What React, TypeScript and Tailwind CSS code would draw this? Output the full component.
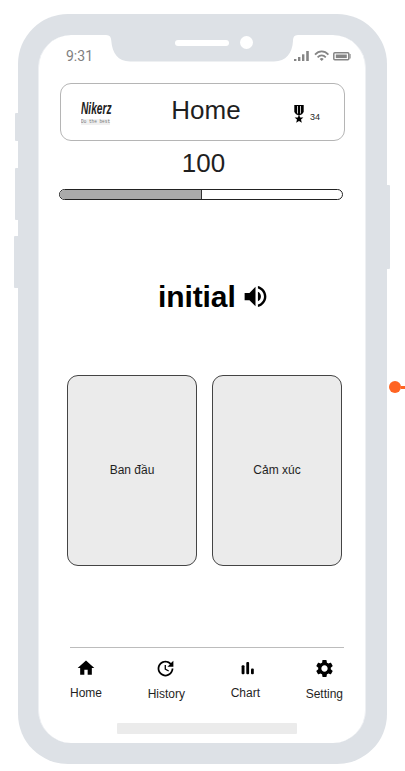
import React from "react";
import { MdHome, MdUpdate, MdSettings, MdVolumeUp } from "react-icons/md";

function StatusIcons() {
  return (
    <svg width="58" height="12" viewBox="0 0 58 12" fill="#858585" className="block">
      <rect x="0" y="9" width="2.4" height="2" />
      <rect x="4" y="7" width="2.4" height="4" />
      <rect x="8" y="4.3" width="2.4" height="6.7" />
      <rect x="12.2" y="1" width="2.6" height="10" />
      <g fill="none" stroke="#858585" strokeWidth="1.7">
        <path d="M21 4.6C25 0.3 30.4 0.3 34.4 4.6" />
        <path d="M23.6 7.3C26 4.8 29.4 4.8 31.8 7.3" />
      </g>
      <path d="M25.7 8.9a3 3 0 0 1 4 0l-2 2.2z" />
      <rect x="39.8" y="2.8" width="15" height="7" rx="1" fill="none" stroke="#858585" strokeWidth="1.5" />
      <rect x="41.8" y="4.5" width="11" height="3.6" />
      <path d="M55.5 4h1.1v4.6h-1.1z" />
    </svg>
  );
}

function Medal() {
  return (
    <svg width="10" height="18" viewBox="0 0 10 18" className="block">
      <path d="M.3 0h9.4v7L8 9.3 5 10.4 2 9.3.3 7z" />
      <path d="M3 1h.8v7.4H3zM6.2 1H7v7.4h-.8z" fill="#fff" />
      <path d="M5 9.8l1.2 2.6 3.2.2-2.4 2 .8 3.1L5 16l-2.8 1.7.8-3.1-2.4-2 3.2-.2z" />
    </svg>
  );
}

function ChartIcon() {
  return (
    <svg width="20" height="20" viewBox="0 0 20 20">
      <rect x="6.6" y="7.3" width="2.9" height="9" rx="1" />
      <rect x="11.3" y="4.1" width="2.8" height="12.2" rx="1" />
      <rect x="16" y="10.5" width="2.8" height="5.8" rx="1" />
    </svg>
  );
}

const tabs = [
  { label: "Home", icon: <MdHome size={20} /> },
  { label: "History", icon: <MdUpdate size={21} /> },
  { label: "Chart", icon: <ChartIcon /> },
  { label: "Setting", icon: <MdSettings size={21} className="ml-px -mr-px" /> },
];

export default function App() {
  return (
    <div className="relative h-[771px] w-[405px] overflow-hidden bg-white pl-[18px] pt-3.5 font-['Liberation_Sans',Arial,sans-serif] text-[#1f1f1f]">
      <div className="absolute left-[15px] top-[113px] h-7 w-1 rounded-l-[1px] bg-[#dde1e6]" />
      <div className="absolute left-[15px] top-[168px] h-[52px] w-1 rounded-l-[1px] bg-[#dde1e6]" />
      <div className="absolute left-3.5 top-[236px] h-[52px] w-[5px] rounded-l-[1px] bg-[#dde1e6]" />
      <div className="absolute left-[386px] top-[185px] h-[84px] w-1 rounded-r-[1px] bg-[#dde1e6]" />
      <div className="absolute left-[389px] top-[381px] flex w-5 items-center">
        <div className="size-3 rounded-full bg-[#ff6422]" />
        <div className="h-[3px] flex-1 bg-[#ff6422]" />
      </div>

      <div className="relative h-[750px] w-[369px] rounded-[50px] bg-[#dde1e6] px-5 pt-[21px]">
        <svg width="192" height="50" viewBox="0 0 192 50" className="absolute left-[88px] top-0 z-10">
          <path d="M0 20V21C4 21.2 5 23 5.3 27C6.2 39 12 47.5 24 47.5H168C180 47.5 186.4 39 187 27C187.2 23 188 21.2 192 21V20Z" fill="#dde1e6" />
          <rect x="69" y="26" width="54" height="6" rx="3" fill="#fff" />
          <circle cx="140.5" cy="28.5" r="6.5" fill="#fff" />
        </svg>
        <div className="flex h-[708px] w-[328px] flex-col rounded-[33px] border-x border-[#eef0f3] bg-white">
          <div className="flex h-[48px] items-start justify-between pl-[27px] pr-[13px] pt-[13px]">
            <span className="font-['Roboto',sans-serif] text-[14px] leading-[16px] text-[#808080]">9:31</span>
            <div className="pt-0.5"><StatusIcons /></div>
          </div>

          <header className="ml-[21px] grid h-[58px] w-[285px] grid-cols-[60px_1fr_60px] rounded-[11px] border border-[#b5b5b5]">
            <div className="flex flex-col pl-5 pt-[17px]">
              <span className="h-4 w-fit origin-left scale-x-[.6] text-[17px] font-bold italic leading-[16px] text-[#222]">Nikerz</span>
              <div className="mt-0.5 h-[6px] w-[29px] bg-[#f0f0f0]">
                <span className="block w-fit origin-left scale-x-[.88] whitespace-nowrap font-['Liberation_Mono',monospace] text-[5px] leading-[6px] text-[#777]">Do the best</span>
              </div>
            </div>
            <h1 className="pl-[7px] pt-[11px] text-center text-[26px] leading-[30px]">Home</h1>
            <div className="flex items-start gap-1.5 pl-2.5 pt-[21px]">
              <Medal />
              <span className="pt-[6px] text-[9px] leading-[12px]">34</span>
            </div>
          </header>

          <p className="mt-[7px] pl-[3px] text-center text-[26px] leading-[30px]">100</p>
          <div className="ml-5 mt-[11px] h-[11px] w-[284px] overflow-hidden rounded-full border border-[#222]">
            <div className="h-full w-[142px] border-r border-[#333] bg-[#aaa]" />
          </div>

          <div className="ml-[119px] mt-20 flex h-[34px] items-center gap-[5px] text-black">
            <h2 className="text-[30px] font-bold leading-[34px] tracking-[-0.1px]">initial</h2>
            <MdVolumeUp size={29} className="relative -top-px" />
          </div>

          <div className="ml-7 mt-[61px] flex gap-[15px]">
            {["Ban đầu", "Cảm xúc"].map((answer) => (
              <button key={answer} className="h-[191px] w-[130px] rounded-[11px] border border-[#444] bg-[#ebebeb] pb-0.5 text-[12px]">
                {answer}
              </button>
            ))}
          </div>

          <nav className="ml-[31px] mt-[81px] flex h-[53px] w-[274px] justify-between border-t border-[#bcbcbc] pr-px pt-[10px] text-black">
            {tabs.map((tab) => (
              <div key={tab.label} className="flex flex-col items-center">
                <div className="flex h-[21px] items-center pr-px">{tab.icon}</div>
                <span className="mt-2 text-[12px] leading-[15px] text-[#1f1f1f]">{tab.label}</span>
              </div>
            ))}
          </nav>
          <div className="ml-[78px] mt-[23px] h-[11px] w-[180px] rounded-[1px] bg-[#ebebeb]" />
        </div>
      </div>
    </div>
  );
}
